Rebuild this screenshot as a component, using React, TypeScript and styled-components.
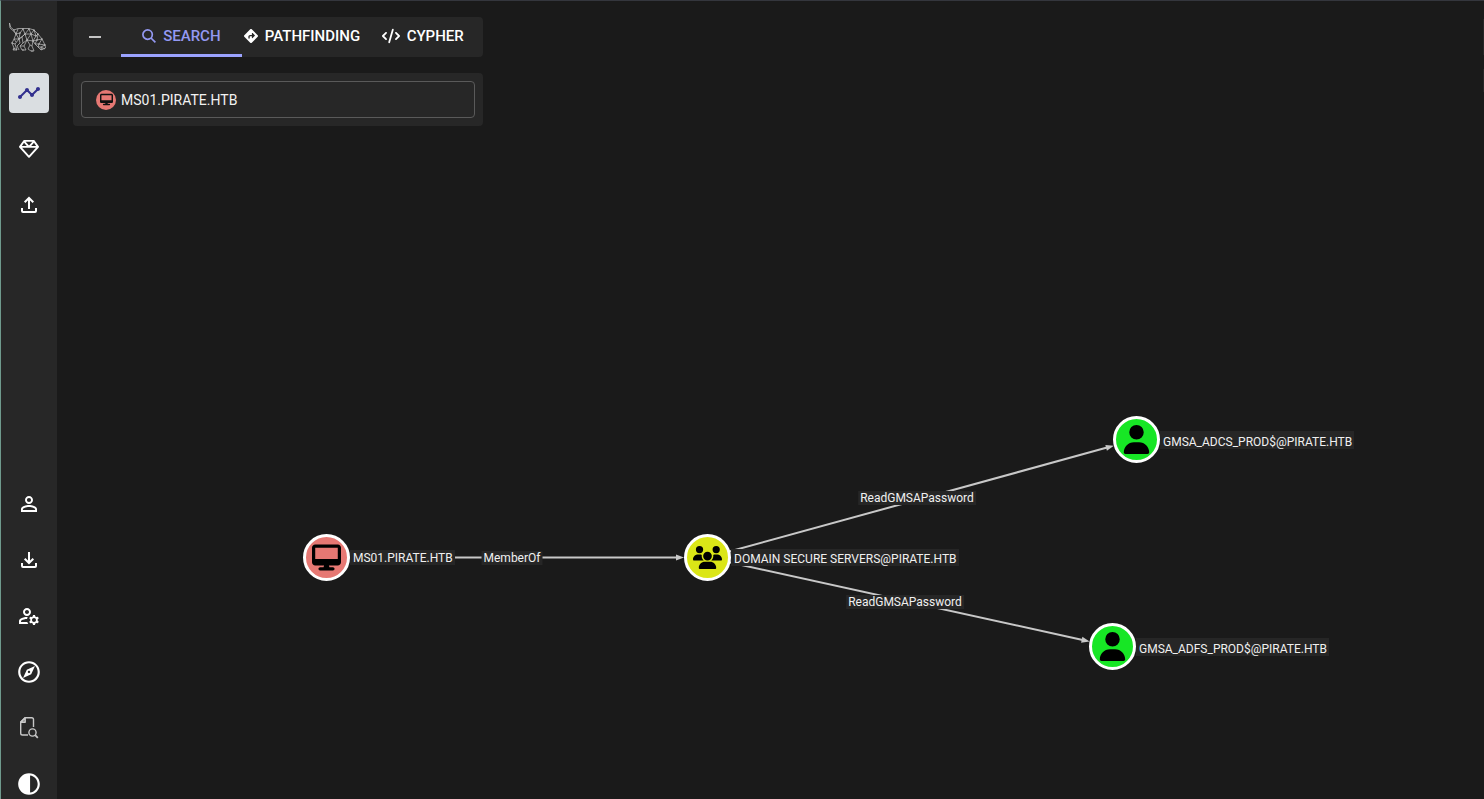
import React, { useState } from "react";
import styled, { createGlobalStyle } from "styled-components";
import { MdContrast, MdOutlineExplore, MdOutlineManageAccounts, MdPersonOutline, MdTimeline } from "react-icons/md";
import { FaCode, FaDesktop, FaDiamondTurnRight, FaRegGem, FaUser, FaUsers } from "react-icons/fa6";

const GlobalStyle = createGlobalStyle`
  *, *::before, *::after { box-sizing: border-box; }
  body {
    margin: 0;
    background: #1a1a1a;
    color: #fff;
    font-family: Roboto, "Liberation Sans", sans-serif;
  }
`;

const Page = styled.div`
  display: flex;
  height: 100vh;
  overflow: hidden;
  border-left: 1px solid #6f9a8d;
  border-top: 1px solid #34363d;
`;

const Sidebar = styled.aside`
  display: flex;
  flex-direction: column;
  flex: none;
  width: 56px;
  background: #272727;
`;

const LogoLink = styled.a`
  display: block;
  height: 32px;
  margin: 20px 8px;
  color: #c4c4c4;
`;

const Nav = styled.nav<{ $end?: boolean }>`
  display: flex;
  flex-direction: column;
  align-items: center;
  gap: ${(p) => (p.$end ? 26 : 16)}px;
  margin-top: ${(p) => (p.$end ? "auto" : "0")};
`;

const NavButton = styled.button<{ $active?: boolean; $short?: boolean; $muted?: boolean }>`
  display: flex;
  align-items: center;
  justify-content: center;
  width: 40px;
  height: ${(p) => (p.$short ? 30 : 40)}px;
  padding: 0;
  border: 0;
  border-radius: 4px;
  background: ${(p) => (p.$active ? "#dadee1" : "transparent")};
  color: ${(p) => (p.$active ? "#33318f" : p.$muted ? "#c8c8c8" : "#fff")};
  cursor: pointer;
`;

const Main = styled.main`
  position: relative;
  flex: 1;
  min-width: 0;
  overflow: hidden;
  padding: 16px;
`;

const Explore = styled.div`
  position: relative;
  display: flex;
  flex-direction: column;
  gap: 16px;
  width: 410px;
  max-width: 100%;
`;

const TabBar = styled.div`
  display: flex;
  height: 40px;
  border-radius: 4px;
  background: #272727;
`;

const CollapseButton = styled.button`
  display: flex;
  align-items: center;
  justify-content: center;
  width: 48px;
  padding: 0 4px 0 0;
  border: 0;
  background: transparent;
  color: #c4c4c4;
  cursor: pointer;
`;

const TabList = styled.div`
  display: flex;
  flex: 1;
`;

const Tab = styled.button<{ $active: boolean }>`
  display: flex;
  flex: 1 1 0;
  align-items: center;
  justify-content: center;
  gap: 7px;
  min-width: 0;
  padding: 0;
  border: 0;
  border-bottom: 3px solid ${(p) => (p.$active ? "#9ba3ff" : "transparent")};
  background: transparent;
  color: ${(p) => (p.$active ? "#9499f2" : "#fff")};
  font: 500 15px/20px Roboto, "Liberation Sans", sans-serif;
  white-space: nowrap;
  cursor: pointer;
`;

const SearchPanel = styled.div`
  padding: 8px;
  border-radius: 4px;
  background: #272727;
`;

const SearchField = styled.label`
  display: flex;
  align-items: center;
  gap: 5px;
  height: 37px;
  padding: 0 14px;
  border: 1px solid #5a5a5a;
  border-radius: 4px;
`;

const SearchInput = styled.input`
  flex: 1;
  min-width: 0;
  padding: 0;
  border: 0;
  outline: 0;
  background: transparent;
  color: #f2f2f2;
  font: 400 14px/20px Roboto, "Liberation Sans", sans-serif;
`;

const KindBadge = styled.span`
  display: flex;
  align-items: center;
  justify-content: center;
  flex: none;
  width: 20px;
  height: 20px;
  border-radius: 50%;
  background: #e67873;
  color: #111;
`;

const EdgeLayer = styled.svg`
  position: absolute;
  inset: 0;
  width: 100%;
  height: 100%;
`;

const NODE = 47;

const NodeItem = styled.div<{ $x: number; $y: number }>`
  position: absolute;
  left: ${(p) => p.$x}px;
  top: ${(p) => p.$y}px;
  display: flex;
  align-items: center;
`;

const NodeDisc = styled.span<{ $fill: string }>`
  display: flex;
  align-items: center;
  justify-content: center;
  width: ${NODE}px;
  height: ${NODE}px;
  border: 3px solid #fff;
  border-radius: 50%;
  background: ${(p) => p.$fill};
  color: #000;
`;

const NodeLabel = styled.span<{ $pad: number }>`
  padding: ${(p) => p.$pad}px 2px 0 3px;
  background: #262626;
  color: #f0f0f0;
  font-size: 12px;
  line-height: 14px;
  white-space: nowrap;
`;

const EdgeLabel = styled.span<{ $x: number; $y: number }>`
  position: absolute;
  left: ${(p) => p.$x}px;
  top: ${(p) => p.$y}px;
  padding: 0 2px;
  background: #262626;
  color: #f0f0f0;
  font-size: 12px;
  line-height: 14px;
  white-space: nowrap;
  transform: translate(-50%, -50%);
`;

const ControlRail = styled.div`
  position: absolute;
  top: 18px;
  right: 0;
  display: flex;
  flex-direction: column;
  gap: 14px;
  width: 1px;
`;

const RailSegment = styled.div<{ $h: number }>`
  height: ${(p) => p.$h}px;
  background: #272727;
`;

const nodes = [
  { id: "ms01", label: "MS01.PIRATE.HTB", x: 246, y: 533, pad: 1, fill: "#e67873", icon: <FaDesktop size={29} /> },
  { id: "dss", label: "DOMAIN SECURE SERVERS@PIRATE.HTB", x: 627, y: 533, pad: 3, fill: "#dbe617", icon: <FaUsers size={29} /> },
  { id: "adcs", label: "GMSA_ADCS_PROD$@PIRATE.HTB", x: 1056, y: 415, pad: 4, fill: "#17e625", icon: <FaUser size={29} /> },
  { id: "adfs", label: "GMSA_ADFS_PROD$@PIRATE.HTB", x: 1032, y: 622, pad: 4, fill: "#17e625", icon: <FaUser size={29} /> },
];

const edges = [
  { from: "ms01", to: "dss", label: "MemberOf", x: 455, y: 557 },
  { from: "dss", to: "adcs", label: "ReadGMSAPassword", x: 860, y: 497 },
  { from: "dss", to: "adfs", label: "ReadGMSAPassword", x: 848, y: 601 },
];

function Edge({ from, to }: { from: string; to: string }) {
  const a = nodes.find((n) => n.id === from)!;
  const b = nodes.find((n) => n.id === to)!;
  const r = NODE / 2;
  const dx = b.x - a.x;
  const dy = b.y - a.y;
  const len = Math.hypot(dx, dy);
  const angle = (Math.atan2(dy, dx) * 180) / Math.PI;
  const tip = len - r;
  return (
    <g transform={`translate(${a.x + r} ${a.y + r}) rotate(${angle})`}>
      <path d={`M0 0H${tip - 7}`} stroke="#c8c8c8" strokeWidth="2" />
      <path d={`M${tip} 0l-8 -3v6z`} fill="#c8c8c8" />
    </g>
  );
}

function HoundLogo() {
  return (
    <svg width="40" height="32" viewBox="0 0 40 32" fill="none" stroke="currentColor" strokeWidth="0.7" strokeLinejoin="round" aria-hidden="true">
      <path d="M0.5 2L1.5 6L5 9L9 7.500L15 7.500L20 7.500L25 9L29 13L33 18L36 24L36.500 27L32 29L29 26L26 23L24 20" />
      <path d="M0.500 2L1 7L5 10.500L7 13L5 18L3 22L5 27L4 29H8L6 23L10 18L13 16" />
      <path d="M9 8L7 13L11 12L14 8L16 13L20 8L22 13L25 9L27 15L29 13L28 19L33 18L30 23L36 24L32 26L36 28" />
      <path d="M5 9.500L7 13M11 12L10 18L16 13L13 16L14 22L11 25L13 29H17L15 25L18 19L16 13L22 13L18 19L21 24L19 28L22 30H25L23 25L24 20L22 13L27 15L24 20L28 19L26 23L30 23L29 26L32 26L32 29" />
      <path d="M7 13L10 18L5 18L7 21M10 18L11 22L8 25L10 29M14 22L18 19L24 20M21 24L23 25M3 22L6 23M5 27L8 29M15 25L11 25" />
      <path d="M5 9h0M7 13h0M11 12h0M14 8h0M16 13h0M20 8h0M22 13h0M25 9h0M27 15h0M29 13h0M10 18h0M18 19h0M24 20h0M28 19h0M33 18h0M30 23h0M36 24h0M5 28h0M14 29h0M23 30h0M33 28h0M3 22h0" strokeWidth="1.3" strokeLinecap="round" />
    </svg>
  );
}

function SearchGlyph() {
  return (
    <svg width="14" height="14" viewBox="0 0 14 14" fill="none" stroke="currentColor" strokeWidth="1.700" aria-hidden="true">
      <circle cx="5.600" cy="5.600" r="4.700" />
      <path d="M9 9L13.400 13.400" />
    </svg>
  );
}

function TrayArrow({ up }: { up?: boolean }) {
  return (
    <svg width="24" height="24" viewBox="0 0 24 24" fill="none" stroke="currentColor" strokeWidth="2" aria-hidden="true">
      <path d="M5 15v3q0 1 1 1h12q1 0 1-1v-3" />
      <path d={up ? "M12 16V5.500M7.700 9.300L12 5l4.300 4.300" : "M12 4v10.500M7.700 10.700L12 15l4.300-4.300"} />
    </svg>
  );
}

function FileSearch() {
  return (
    <svg width="24" height="24" viewBox="0 1 24 24" fill="none" stroke="currentColor" strokeWidth="1.4" strokeLinejoin="round" aria-hidden="true">
      <path d="M11 20H5.500Q3.700 20 3.700 18.200V7L8 2.700h6.700q1.800 0 1.800 1.800V12" />
      <path d="M8.200 2.700V7.200H3.700z" fill="currentColor" fillOpacity="0.5" />
      <circle cx="15.500" cy="17.500" r="3.600" />
      <path d="M18.200 20.200L20.800 22.800" strokeWidth="1.8" />
    </svg>
  );
}

const tabs = [
  { name: "SEARCH", icon: <SearchGlyph /> },
  { name: "PATHFINDING", icon: <FaDiamondTurnRight size={14} /> },
  { name: "CYPHER", icon: <FaCode size={18} /> },
];

export default function App() {
  const [tab, setTab] = useState("SEARCH");
  const [query, setQuery] = useState("MS01.PIRATE.HTB");
  return (
    <>
      <GlobalStyle />
      <Page>
        <Sidebar>
          <LogoLink href="#" aria-label="Home"><HoundLogo /></LogoLink>
          <Nav aria-label="Primary">
            <NavButton $active aria-label="Explore"><MdTimeline size={24} /></NavButton>
            <NavButton aria-label="Group management"><FaRegGem size={20} /></NavButton>
            <NavButton aria-label="Quick upload"><TrayArrow up /></NavButton>
          </Nav>
          <Nav $end aria-label="Secondary">
            <NavButton $short aria-label="Profile"><MdPersonOutline size={24} /></NavButton>
            <NavButton $short aria-label="Download collectors"><TrayArrow /></NavButton>
            <NavButton $short aria-label="Administration"><MdOutlineManageAccounts size={24} /></NavButton>
            <NavButton $short aria-label="API explorer"><MdOutlineExplore size={26} /></NavButton>
            <NavButton $short $muted aria-label="Documentation"><FileSearch /></NavButton>
            <NavButton $short aria-label="Dark mode"><MdContrast size={26} /></NavButton>
          </Nav>
        </Sidebar>
        <Main>
          <EdgeLayer aria-hidden="true">
            {edges.map((e) => <Edge key={e.to} from={e.from} to={e.to} />)}
          </EdgeLayer>
          {nodes.map((n) => (
            <NodeItem key={n.id} $x={n.x} $y={n.y}>
              <NodeDisc $fill={n.fill}>{n.icon}</NodeDisc>
              <NodeLabel $pad={n.pad}>{n.label}</NodeLabel>
            </NodeItem>
          ))}
          {edges.map((e) => <EdgeLabel key={e.to} $x={e.x} $y={e.y}>{e.label}</EdgeLabel>)}
          <Explore>
            <TabBar>
              <CollapseButton aria-label="Collapse">
                <svg width="12" height="2" viewBox="0 0 12 2" aria-hidden="true"><path d="M0 1H12" stroke="currentColor" strokeWidth="2" /></svg>
              </CollapseButton>
              <TabList role="tablist">
                {tabs.map((t) => (
                  <Tab key={t.name} role="tab" aria-selected={tab === t.name} $active={tab === t.name} onClick={() => setTab(t.name)}>
                    {t.icon}
                    {t.name}
                  </Tab>
                ))}
              </TabList>
            </TabBar>
            <SearchPanel>
              <SearchField>
                <KindBadge><FaDesktop size={13} /></KindBadge>
                <SearchInput aria-label="Search nodes" value={query} onChange={(e) => setQuery(e.target.value)} />
              </SearchField>
            </SearchPanel>
          </Explore>
          <ControlRail>
            <RailSegment $h={36} />
            <RailSegment $h={23} />
          </ControlRail>
        </Main>
      </Page>
    </>
  );
}
